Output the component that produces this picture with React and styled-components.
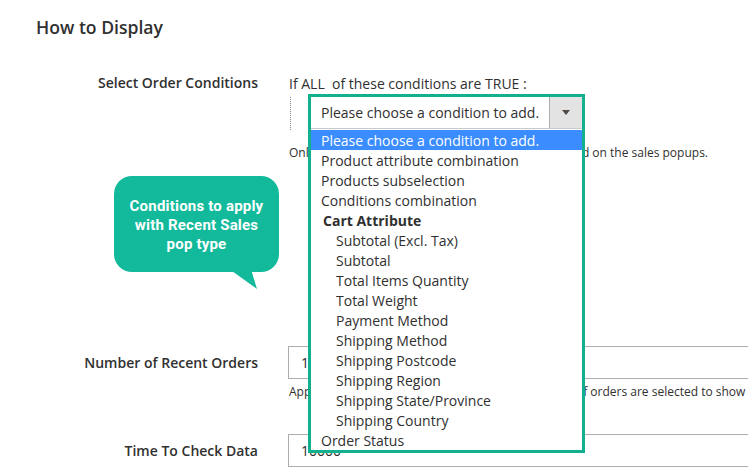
import React from "react";
import styled, { createGlobalStyle } from "styled-components";

const Global = createGlobalStyle`
  html, body { margin: 0; padding: 0; background: #fff; }
  body { font-family: "Open Sans", "Liberation Sans", sans-serif; color: #303030; overflow: hidden; }
`;

const Page = styled.div`
  position: relative;
  width: 748px;
  height: 471px;
  overflow: hidden;
  padding: 17px 0 0 36px;
  box-sizing: border-box;
`;

const Title = styled.h2`
  margin: 0;
  font-size: 17.6px;
  line-height: 20px;
  font-weight: 600;
  color: #303030;
`;

const Fields = styled.div`
  margin-top: 36px;
  margin-left: -36px;
  display: flex;
  flex-direction: column;
`;

const Field = styled.div`
  display: grid;
  grid-template-columns: 258px 1fr;
  column-gap: 30px;
  margin-top: ${(p) => p.$gap || 0}px;
`;

const Label = styled.div`
  text-align: right;
  font-size: 14px;
  font-weight: 600;
  line-height: 20px;
  padding-top: ${(p) => (p.$offset ? 7 : 0)}px;
  color: #303030;
`;

const Control = styled.div`
  min-width: 0;
`;

const Intro = styled.div`
  font-size: 14px;
  line-height: 20px;
  padding-top: 1px;
  padding-left: 1px;
`;

const ConditionBlock = styled.div`
  margin-top: 3px;
  margin-left: 2px;
  height: 33px;
  border-left: 1px dotted #8a8a8a;
  padding-left: 20px;
  box-sizing: border-box;
`;

const Picker = styled.div`
  position: relative;
  width: 271px;
  height: 32px;
`;

const Frame = styled.div`
  position: absolute;
  top: -3px;
  left: -3px;
  width: 271px;
  border: 3px solid #13b08f;
  background: #fff;
  z-index: 2;
`;

const SelectBox = styled.div`
  display: flex;
  height: 32px;
  background: #fff;
  border-bottom: 1px solid #c9c9c9;
  box-sizing: border-box;
`;

const SelectValue = styled.div`
  flex: 1;
  font-size: 14px;
  line-height: 32px;
  padding-left: 10px;
`;

const ArrowButton = styled.div`
  width: 32px;
  background: #e3e3e3;
  border-left: 1px solid #adadad;
  display: flex;
  align-items: center;
  justify-content: center;
  &::after {
    content: "";
    border-left: 4px solid transparent;
    border-right: 4px solid transparent;
    border-top: 5px solid #514943;
  }
`;

const List = styled.div`
  display: flex;
  flex-direction: column;
  padding-top: 1px;
`;

const Option = styled.div`
  height: 20px;
  line-height: 21px;
  font-size: 14px;
  padding-left: ${(p) => (p.$group ? 12 : p.$nested ? 25 : 10)}px;
  font-weight: ${(p) => (p.$group ? 700 : 400)};
  background: ${(p) => (p.$active ? "#3a8cff" : "transparent")};
  color: ${(p) => (p.$active ? "#fff" : "#303030")};
  white-space: nowrap;
`;

const Note = styled.div`
  font-size: 12px;
  line-height: 18px;
  margin-top: ${(p) => p.$top}px;
  white-space: nowrap;
  padding-left: 1px;
`;

const Input = styled.div`
  width: 520px;
  height: 33px;
  border: 1px solid #adadad;
  box-sizing: border-box;
  font-size: 14px;
  line-height: 31px;
  padding-left: 12px;
  color: #303030;
`;

const Bubble = styled.div`
  position: absolute;
  left: 114px;
  top: 176px;
  width: 165px;
  height: 96px;
  border-radius: 18px;
  background: #13b99b;
  color: #fff;
  display: flex;
  align-items: center;
  justify-content: center;
  text-align: center;
  font-family: Roboto, "Liberation Sans", sans-serif;
  font-weight: 700;
  font-size: 15px;
  line-height: 19px;
  letter-spacing: 0.2px;
  padding: 2px 12px 0;
  box-sizing: border-box;
  z-index: 1;
`;

const Tail = styled.svg`
  position: absolute;
  left: 218px;
  top: 266px;
  width: 42px;
  height: 25px;
  z-index: 1;
`;

const groupItems = [
  "Subtotal (Excl. Tax)",
  "Subtotal",
  "Total Items Quantity",
  "Total Weight",
  "Payment Method",
  "Shipping Method",
  "Shipping Postcode",
  "Shipping Region",
  "Shipping State/Province",
  "Shipping Country",
];

export default function App() {
  return (
    <>
      <Global />
      <Page>
        <Title>How to Display</Title>
        <Fields>
          <Field>
            <Label>Select Order Conditions</Label>
            <Control>
              <Intro>If ALL&nbsp; of these conditions are TRUE :</Intro>
              <ConditionBlock>
                <Picker>
                  <Frame>
                    <SelectBox>
                      <SelectValue>Please choose a condition to add.</SelectValue>
                      <ArrowButton />
                    </SelectBox>
                    <List>
                      <Option $active>Please choose a condition to add.</Option>
                      <Option>Product attribute combination</Option>
                      <Option>Products subselection</Option>
                      <Option>Conditions combination</Option>
                      <Option $group>Cart Attribute</Option>
                      {groupItems.map((t) => (
                        <Option key={t} $nested>
                          {t}
                        </Option>
                      ))}
                      <Option>Order Status</Option>
                    </List>
                  </Frame>
                </Picker>
              </ConditionBlock>
              <Note $top={14}>
                Only orders matching these conditions are&nbsp;&nbsp; displayed on the sales popups.
              </Note>
            </Control>
          </Field>
          <Field $gap={184}>
            <Label $offset>Number of Recent Orders</Label>
            <Control>
              <Input>10</Input>
              <Note $top={4}>
                Applied for the Recent Sales pop type. The number of orders are selected to show
              </Note>
            </Control>
          </Field>
          <Field $gap={33}>
            <Label $offset>Time To Check Data</Label>
            <Control>
              <Input>10000</Input>
            </Control>
          </Field>
        </Fields>
        <Bubble>Conditions to apply with Recent Sales pop type</Bubble>
        <Tail viewBox="0 0 42 25">
          <polygon points="7,0 32,0 39,23" fill="#13b99b" />
        </Tail>
      </Page>
    </>
  );
}
